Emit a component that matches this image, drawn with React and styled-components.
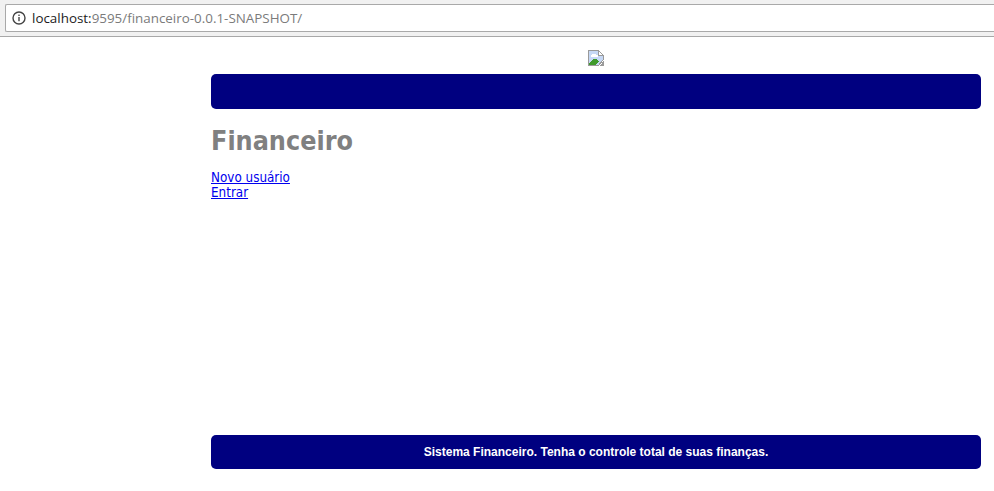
import React from 'react';
import styled, { createGlobalStyle } from 'styled-components';

const GlobalStyle = createGlobalStyle`
  html, body {
    margin: 0;
    padding: 0;
    background: #ffffff;
  }
  body {
    font-family: "DejaVu Sans", Verdana, sans-serif;
    overflow: hidden;
  }
`;

const Page = styled.div`
  width: 994px;
  height: 491px;
  display: flex;
  flex-direction: column;
`;

const BrowserBar = styled.div`
  height: 37px;
  padding-top: 4px;
  box-sizing: border-box;
  background: #f1f1f1;
  border-bottom: 1px solid #a8a8a8;
  flex: none;
`;

const AddressBox = styled.div`
  height: 28px;
  margin-left: 5px;
  box-sizing: border-box;
  display: flex;
  align-items: center;
  gap: 6px;
  padding-left: 6px;
  background: #ffffff;
  border: 1px solid #a9a9a9;
  border-right: none;
  border-radius: 2px 0 0 2px;
  font-family: "Open Sans", "Noto Sans", sans-serif;
  font-size: 13.4px;
  color: #7b7b7b;
`;

const Host = styled.span`
  color: #1c1c1c;
`;

const Url = styled.div`
  white-space: nowrap;
`;

const Content = styled.div`
  flex: 1;
  display: flex;
  flex-direction: column;
  margin: 0 13px 22px 211px;
  padding-top: 13px;
`;

const LogoRow = styled.div`
  height: 24px;
  display: flex;
  justify-content: center;
  align-items: flex-start;
  flex: none;
`;

const Banner = styled.div`
  height: 35px;
  background: #000080;
  border-radius: 5px;
  flex: none;
`;

const Title = styled.h1`
  margin: 16px 0 0;
  font-size: 26.67px;
  font-stretch: condensed;
  line-height: 31px;
  font-weight: 700;
  color: #808080;
`;

const Links = styled.nav`
  margin-top: 14px;
  display: flex;
  flex-direction: column;
  align-items: flex-start;
  flex: 1;
`;

const NavLink = styled.a`
  font-size: 13.33px;
  font-stretch: condensed;
  line-height: 15px;
  color: #0000ee;
  text-decoration: underline;
`;

const Footer = styled.div`
  height: 34px;
  display: flex;
  align-items: center;
  justify-content: center;
  background: #000080;
  border-radius: 5px;
  font-family: "Liberation Sans", Arial, sans-serif;
  font-size: 12px;
  font-weight: 700;
  color: #ffffff;
  flex: none;
`;

function InfoIcon() {
  return (
    <svg width="14" height="14" viewBox="0 0 14 14" fill="none">
      <circle cx="7" cy="7" r="6" stroke="#444" strokeWidth="1.4" />
      <rect x="6.3" y="6" width="1.4" height="4.2" fill="#444" />
      <rect x="6.3" y="3.6" width="1.4" height="1.4" fill="#444" />
    </svg>
  );
}

function BrokenImage() {
  return (
    <svg width="16" height="16" viewBox="0 0 16 16" shapeRendering="crispEdges">
      <path d="M0.5 0.5H10.5L15.5 5.5V9.5L10.5 15.5H0.5Z" fill="#c6d8f5" stroke="#9a9a9a" />
      <path d="M10.5 0.5V5.5H15.5Z" fill="#ffffff" stroke="#9a9a9a" />
      <path d="M4 4h4v1h2v2H3V5h1z" fill="#ffffff" />
      <path d="M1 15V13L6 9H8L11 11L8 15Z" fill="#3f9a2c" />
      <path d="M12 15.5L15.5 11V15.5Z" fill="#9a9a9a" />
    </svg>
  );
}

export default function App() {
  return (
    <Page>
      <GlobalStyle />
      <BrowserBar>
        <AddressBox>
          <InfoIcon />
          <Url>
            <Host>localhost:</Host>9595/financeiro-0.0.1-SNAPSHOT/
          </Url>
        </AddressBox>
      </BrowserBar>
      <Content>
        <LogoRow>
          <BrokenImage />
        </LogoRow>
        <Banner />
        <Title>Financeiro</Title>
        <Links>
          <NavLink href="#novo">Novo usuário</NavLink>
          <NavLink href="#entrar">Entrar</NavLink>
        </Links>
        <Footer>Sistema Financeiro. Tenha o controle total de suas finanças.</Footer>
      </Content>
    </Page>
  );
}
